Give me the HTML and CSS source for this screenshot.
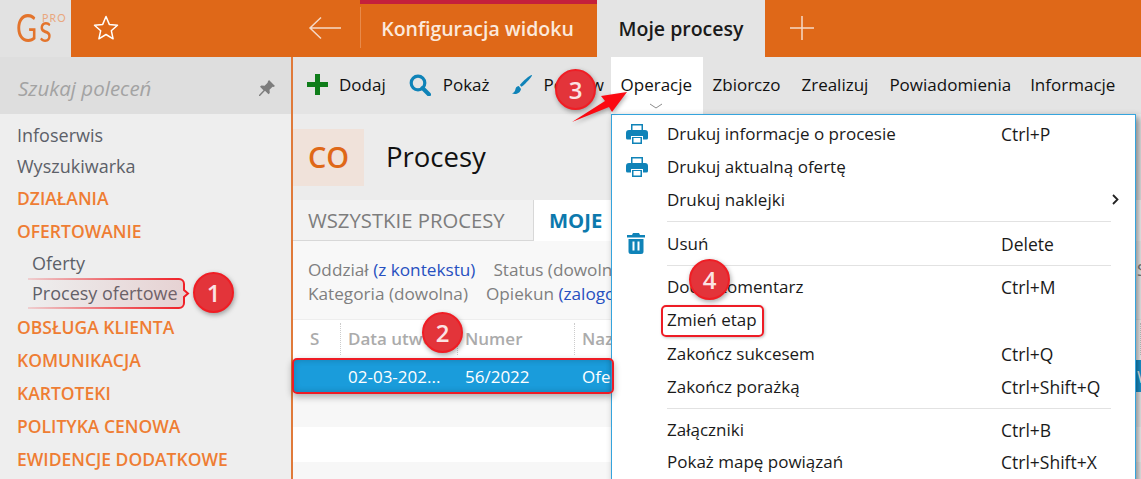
FILE: index.html
```html
<!DOCTYPE html>
<html lang="pl">
<head>
    <meta charset="UTF-8">
    <meta name="viewport" content="width=device-width, initial-scale=1.0">
    <title>Moje procesy</title>
    <link rel="stylesheet" href="styles.css">
</head>
<body>

    <header class="topbar">
        <div class="logo"><span class="logo-gs">Gs</span><span class="logo-pro">PRO</span></div>
        <div class="fav">
            <svg width="26" height="26" viewBox="0 0 26 26"><path d="M13 1.500l3.300 7.900 8.200.8-6.200 5.500 1.800 8.100-7.100-4.300-7.100 4.300 1.800-8.100-6.200-5.500 8.200-.8z" fill="none" stroke="#fff" stroke-width="1.500" stroke-linejoin="round"/></svg>
        </div>
        <div class="back">
            <svg width="34" height="26" viewBox="0 0 34 26"><path d="M33 13H2M13 2.500L2 13l11 10.500" fill="none" stroke="#f6d9c6" stroke-width="1.500"/></svg>
        </div>
        <div class="tab tab-config">Konfiguracja widoku</div>
        <div class="tab tab-active">Moje procesy</div>
        <div class="add-tab">
            <svg width="26" height="26" viewBox="0 0 26 26"><path d="M13 1v24M1 13h24" fill="none" stroke="#f6d9c6" stroke-width="1.500"/></svg>
        </div>
    </header>

    <div class="layout">
        <aside class="sidebar">
            <div class="search">
                <span>Szukaj poleceń</span>
                <svg width="18" height="18" viewBox="0 0 18 18"><path d="M11 1l6 6-1.500 1-1-.3-3 3 .3 3.300-1.300 1.300-3.500-3.500L2 17l-1 0 0-1 4.500-4.800L2 7.800l1.300-1.300 3.300.3 3-3L9.900 2.500z" fill="#7d7d7d"/></svg>
            </div>
            <nav class="nav">
                <a class="nav-item">Infoserwis</a>
                <a class="nav-item">Wyszukiwarka</a>
                <a class="nav-head">DZIAŁANIA</a>
                <a class="nav-head">OFERTOWANIE</a>
                <a class="nav-item nav-sub">Oferty</a>
                <a class="nav-item nav-sub nav-sub-last">Procesy ofertowe</a>
                <a class="nav-head">OBSŁUGA KLIENTA</a>
                <a class="nav-head">KOMUNIKACJA</a>
                <a class="nav-head">KARTOTEKI</a>
                <a class="nav-head">POLITYKA CENOWA</a>
                <a class="nav-head">EWIDENCJE DODATKOWE</a>
            </nav>
        </aside>

        <main class="content">
            <div class="toolbar">
                <div class="tool tool-add">
                    <svg width="21" height="21" viewBox="0 0 21 21"><path d="M8 0h5v8h8v5h-8v8H8v-8H0V8h8z" fill="#0f7d1a"/></svg>
                    <span>Dodaj</span>
                </div>
                <div class="tool tool-show">
                    <svg width="22" height="22" viewBox="0 0 22 22"><circle cx="9" cy="9" r="6.800" fill="none" stroke="#0f83b8" stroke-width="3.200"/><path d="M13.500 14l6.500 6.500" stroke="#0f83b8" stroke-width="4" stroke-linecap="round"/></svg>
                    <span>Pokaż</span>
                </div>
                <div class="tool tool-edit">
                    <svg width="22" height="22" viewBox="0 0 22 22"><path d="M21 1c.8.8-6 8.500-10.500 11.800L8.800 11C12 6.600 20 .3 21 1z" fill="#0f83b8"/><path d="M7.800 12c-2.500.3-3.200 2-3.500 3.800-.2 1.500-1.200 2.800-3.300 3.700 3.500 1.200 8 .3 9-4.500z" fill="#0f83b8"/></svg>
                    <span>Popraw</span>
                </div>
                <div class="tool tool-open">
                    <span>Operacje</span>
                    <svg class="chevron" width="14" height="6" viewBox="0 0 14 6"><path d="M1 1l6 4 6-4" fill="none" stroke="#8c8c8c" stroke-width="1"/></svg>
                </div>
                <div class="tool">Zbiorczo</div>
                <div class="tool">Zrealizuj</div>
                <div class="tool tool-notify">Powiadomienia</div>
                <div class="tool">Informacje</div>
            </div>

            <div class="title-row">
                <div class="badge">CO</div>
                <h1>Procesy</h1>
            </div>

            <div class="tabs">
                <div class="list-tab">WSZYSTKIE PROCESY</div>
                <div class="list-tab list-tab-active">MOJE</div>
            </div>

            <div class="filters">
                <div class="filter-line">
                    <span>Oddział <b>(z kontekstu)</b></span>
                    <span>Status (dowolny)</span>
                    <span class="filter-end">Stan</span>
                </div>
                <div class="filter-line">
                    <span>Kategoria (dowolna)</span>
                    <span>Opiekun <b>(zalogowany)</b></span>
                </div>
            </div>

            <div class="grid-head">
                <div class="col col-s">S</div>
                <div class="col col-date">Data utwo...</div>
                <div class="col col-num">Numer</div>
                <div class="col col-name">Nazwa</div>
            </div>
            <div class="grid-row grid-row-selected">
                <div class="col col-s"></div>
                <div class="col col-date">02-03-202...</div>
                <div class="col col-num">56/2022</div>
                <div class="col col-name">Oferta</div>
                <div class="col-end">W</div>
            </div>
            <div class="grid-row grid-row-odd"></div>
            <div class="grid-row"></div>
            <div class="grid-row grid-row-odd"></div>
        </main>
    </div>

    <!-- dropdown for Operacje -->
    <div class="menu">
        <div class="menu-row">
            <svg class="menu-icon" width="22" height="20" viewBox="0 0 22 20"><path d="M5 0h12v7H5zM6.500 1.500v5h9v-5z" fill="#0f83b8" fill-rule="evenodd"/><path d="M3 6h16a3 3 0 0 1 3 3v5a1.500 1.500 0 0 1-1.500 1.500H17V12H5v3.500H1.500A1.500 1.500 0 0 1 0 14V9a3 3 0 0 1 3-3z" fill="#0f83b8"/><path d="M6 13h10v7H6z" fill="#0f83b8"/><path d="M7.500 14h7v4.500h-7z" fill="#fff"/></svg>
            <span>Drukuj informacje o procesie</span><span class="shortcut">Ctrl+P</span>
        </div>
        <div class="menu-row">
            <svg class="menu-icon" width="22" height="20" viewBox="0 0 22 20"><path d="M5 0h12v7H5zM6.500 1.500v5h9v-5z" fill="#0f83b8" fill-rule="evenodd"/><path d="M3 6h16a3 3 0 0 1 3 3v5a1.500 1.500 0 0 1-1.500 1.500H17V12H5v3.500H1.500A1.500 1.500 0 0 1 0 14V9a3 3 0 0 1 3-3z" fill="#0f83b8"/><path d="M6 13h10v7H6z" fill="#0f83b8"/><path d="M7.500 14h7v4.500h-7z" fill="#fff"/></svg>
            <span>Drukuj aktualną ofertę</span>
        </div>
        <div class="menu-row">
            <span>Drukuj naklejki</span>
            <svg class="submenu" width="7" height="11" viewBox="0 0 7 11"><path d="M1 1l4.500 4.500L1 10" fill="none" stroke="#222" stroke-width="1.800"/></svg>
        </div>
        <div class="menu-sep"></div>
        <div class="menu-row">
            <svg class="menu-icon menu-icon-trash" width="18" height="21" viewBox="0 0 18 21"><path d="M6 0h6l1 2h5v2.500H0V2h5z" fill="#0f83b8"/><path d="M1.500 6h15v12.500a2.500 2.500 0 0 1-2.500 2.500H4a2.500 2.500 0 0 1-2.500-2.500z" fill="#0f83b8"/><path d="M5.500 8.500h2v9h-2zM10.500 8.500h2v9h-2z" fill="#fff"/></svg>
            <span>Usuń</span><span class="shortcut">Delete</span>
        </div>
        <div class="menu-sep menu-sep-tight"></div>
        <div class="menu-row"><span>Dodaj komentarz</span><span class="shortcut">Ctrl+M</span></div>
        <div class="menu-row"><span>Zmień etap</span></div>
        <div class="menu-row menu-row-down"><span>Zakończ sukcesem</span><span class="shortcut">Ctrl+Q</span></div>
        <div class="menu-row"><span>Zakończ porażką</span><span class="shortcut">Ctrl+Shift+Q</span></div>
        <div class="menu-sep menu-sep-tight"></div>
        <div class="menu-row"><span>Załączniki</span><span class="shortcut">Ctrl+B</span></div>
        <div class="menu-row menu-row-up"><span>Pokaż mapę powiązań</span><span class="shortcut">Ctrl+Shift+X</span></div>
    </div>

    <!-- tutorial annotations on top of the screenshot -->
    <svg class="callout" width="170" height="36" viewBox="0 0 170 36">
        <defs>
            <linearGradient id="fade" x1="0" x2="1" y1="0" y2="0">
                <stop offset="0" stop-color="#f01d24" stop-opacity="0.15"/>
                <stop offset="0.6" stop-color="#f01d24" stop-opacity="0.7"/>
                <stop offset="1" stop-color="#f01d24"/>
            </linearGradient>
            <linearGradient id="fadefill" x1="0" x2="1" y1="0" y2="0">
                <stop offset="0" stop-color="#c86a6e" stop-opacity="0"/>
                <stop offset="1" stop-color="#c86a6e" stop-opacity="0.22"/>
            </linearGradient>
        </defs>
        <path d="M0 3H151a5 5 0 0 1 5 5v6l4 3.500-4 3.500V27a5 5 0 0 1-5 5H0" fill="url(#fadefill)" stroke="url(#fade)" stroke-width="2"/>
    </svg>
    <div class="mark mark-1">1</div>
    <div class="row-outline"></div>
    <div class="mark mark-2">2</div>
    <svg class="arrow" width="60" height="34" viewBox="0 0 60 34"><path d="M55 0L40 20l-3-5L0 30 33 9l-4-5z" fill="#fb0a12"/></svg>
    <div class="mark mark-3">3</div>
    <div class="mark mark-4">4</div>
    <div class="step-outline"></div>

</body>
</html>
```

FILE: styles.css
```css
* {
    box-sizing: border-box;
}

html, body {
    height: 100%;
}

body {
    margin: 0;
    overflow: hidden;
    background-color: #eee;
    color: #222;
    font-family: "Open Sans", sans-serif;
    font-size: 17px;
}

/* top bar */

.topbar {
    display: flex;
    height: 57px;
    background-color: #df6818;
}

.logo {
    width: 71px;
    display: flex;
    background-color: #e2e2e2;
    padding: 6px 0 0 16px;
}

.logo-gs {
    font-family: "Lato", sans-serif;
    font-size: 38px;
    line-height: 42px;
    letter-spacing: 3px;
    color: #e3742c;
    transform: scaleX(0.76);
    transform-origin: left;
}

.logo-pro {
    font-family: "Lato", sans-serif;
    font-size: 10.500px;
    letter-spacing: 1.200px;
    line-height: 10px;
    margin: 7px 0 0 -24px;
    color: #e9a77e;
}

.fav {
    width: 222px;
    padding: 15px 0 0 22px;
}

.back {
    width: 68px;
    margin: 7px 0 9px;
    padding: 8px 0 0 15px;
    border-right: 1px solid #e88a4b;
}

.tab {
    display: flex;
    align-items: center;
    justify-content: center;
    height: 57px;
    font-weight: 600;
    font-size: 19.500px;
}

.tab-config {
    width: 237px;
    margin-left: -1px;
    padding-bottom: 4px;
    padding-right: 2px;
    color: #fbe9dc;
    border-top: 4px solid #c4203c;
}

.tab-active {
    width: 168px;
    padding-bottom: 1px;
    background-color: #e4e4e4;
    color: #1a1a1a;
}

.add-tab {
    padding: 15px 0 0 24px;
}

/* sidebar */

.layout {
    display: flex;
    height: 422px;
}

.sidebar {
    width: 293px;
    flex-shrink: 0;
    border-right: 2px solid #e07a3a;
}

.search {
    height: 57px;
    display: flex;
    align-items: center;
    justify-content: space-between;
    padding: 4px 15px 0 18px;
    background-color: #dedede;
    color: #a3a3a3;
    font-style: italic;
    font-size: 20.500px;
}

.nav {
    display: flex;
    flex-direction: column;
    padding: 6px 0 0 17px;
}

.nav-item {
    height: 31px;
    line-height: 31px;
    color: #5c6068;
    font-size: 18px;
}

.nav-sub {
    height: 30px;
    line-height: 30px;
    padding-left: 15px;
}

.nav-sub-last {
    margin-bottom: 3px;
}

.nav-head {
    height: 33px;
    line-height: 33px;
    color: #ee7d33;
    font-weight: 600;
    font-size: 17.500px;
}

/* main area */

.content {
    flex: 1;
    min-width: 0;
    display: flex;
    flex-direction: column;
}

.content > * {
    flex-shrink: 0;
}

.toolbar {
    height: 57px;
    display: flex;
    padding-left: 14px;
    background-color: #e4e4e4;
    color: #111;
}

.tool {
    display: flex;
    align-items: center;
    gap: 11px;
    margin-right: 21px;
    padding-bottom: 2px;
    white-space: nowrap;
}

.tool-add { margin-right: 23px; }
.tool-show { gap: 12px; margin-right: 21px; }
.tool-edit { margin-right: 0; width: 100px; }
.tool-notify { margin-right: 19px; }

.tool-open {
    position: relative;
    width: 92px;
    margin-right: 10px;
    padding-left: 10px;
    background-color: #fff;
}

.chevron {
    position: absolute;
    left: 38px;
    bottom: 5px;
}

.title-row {
    height: 86px;
    display: flex;
    align-items: center;
    background-color: #ececec;
}

.badge {
    width: 71px;
    height: 57px;
    margin-top: 1px;
    padding-bottom: 2px;
    display: flex;
    align-items: center;
    justify-content: center;
    background-color: #f0e2da;
    color: #df6818;
    font-size: 29px;
    font-weight: 600;
}

h1 {
    margin: 0 0 2px 22px;
    font-size: 27.500px;
    font-weight: 400;
    color: #111;
}

.tabs {
    height: 41px;
    display: flex;
    background-color: #f2f2f2;
    border-bottom: 1px solid #d8d8d8;
}

.list-tab {
    width: 240px;
    padding: 6px 0 0 15px;
    color: #7d7d7d;
    font-size: 20.300px;
}

.list-tab-active {
    flex: 1;
    margin-bottom: -1px;
    background-color: #fff;
    border-left: 1px solid #d8d8d8;
    color: #0c79ad;
    font-weight: 700;
}

.filters {
    height: 79px;
    padding-top: 17px;
    background-color: #f8f8f8;
    border-bottom: 1px solid #eee;
    color: #7f7f7f;
    font-size: 17.200px;
    line-height: 24px;
}

.filters b {
    font-weight: 400;
    color: #2750c0;
}

.filter-line {
    display: flex;
    gap: 18px;
    padding-left: 15px;
    white-space: nowrap;
}

.filter-end {
    margin-left: auto;
    width: 4px;
    overflow: hidden;
}

.grid-head, .grid-row {
    display: flex;
    white-space: nowrap;
    overflow: hidden;
}

.grid-head {
    height: 40px;
    align-items: center;
    padding-bottom: 3px;
    background-color: #fff;
    color: #ababab;
    font-weight: 600;
}

.grid-row {
    height: 35px;
    background-color: #fff;
}

.grid-row-odd {
    background-color: #f7f7f7;
}

.grid-row-selected {
    height: 32px;
    align-items: center;
    background-color: #1a9cdb;
    color: #fff;
}

.col {
    padding-left: 7px;
}

.col-s { width: 48px; padding-left: 17px; }
.col-date { width: 117px; }
.col-num { width: 117px; }
.col-name { flex: 1; }

.col-end {
    width: 4px;
    overflow: hidden;
}

.grid-head .col {
    border-right: 1px dotted #ccc;
    height: 32px;
    line-height: 32px;
}

/* dropdown */

.menu {
    position: absolute;
    left: 611px;
    top: 114px;
    width: 525px;
    height: 380px;
    padding-top: 2px;
    background-color: #fff;
    border: 1px solid #35a4dd;
    box-shadow: 3px 3px 7px rgba(0, 0, 0, 0.45);
    color: #1a1a1a;
}

.menu-row {
    position: relative;
    height: 33px;
    display: flex;
    align-items: center;
    padding-left: 55px;
}

.menu-row-down {
    margin-top: 1px;
}

.menu-row-up {
    margin-top: -1px;
}

.menu-icon {
    position: absolute;
    left: 14px;
}

.menu-icon-trash {
    left: 15px;
}

.shortcut {
    position: absolute;
    left: 389px;
    font-size: 17.500px;
}

.submenu {
    position: absolute;
    left: 500px;
}

.menu-sep {
    height: 1px;
    margin: 5px 24px 5px 55px;
    background-color: #e2e2e2;
}

.menu-sep-tight {
    margin-bottom: 4px;
}

/* annotations */

.mark {
    position: absolute;
    width: 41px;
    height: 41px;
    display: flex;
    align-items: center;
    justify-content: center;
    border: 2px solid #f01d24;
    border-radius: 50%;
    background-color: #e3343a;
    color: #fbe3e3;
    font-size: 24px;
    font-weight: 600;
    box-shadow: 1px 2px 5px rgba(0, 0, 0, 0.35);
}

.mark-1 { left: 193px; top: 272px; }
.mark-2 { left: 422px; top: 312px; }
.mark-3 { left: 555px; top: 69px; }
.mark-4 { left: 689px; top: 259px; }

.callout {
    position: absolute;
    left: 28px;
    top: 276px;
}

.arrow {
    position: absolute;
    left: 572px;
    top: 92px;
    filter: drop-shadow(1px 2px 2px rgba(0, 0, 0, 0.3));
}

.row-outline {
    position: absolute;
    left: 292px;
    top: 358px;
    width: 322px;
    height: 36px;
    border: 2px solid #ee1c25;
    border-radius: 5px;
    box-shadow: 0 3px 7px rgba(0, 0, 0, 0.3), inset 0 0 6px rgba(0, 0, 0, 0.2);
}

.step-outline {
    position: absolute;
    left: 661px;
    top: 305px;
    width: 103px;
    height: 32px;
    border: 2px solid #ee1c25;
    border-radius: 5px;
    box-shadow: 1px 1px 3px rgba(0, 0, 0, 0.25);
}
```
